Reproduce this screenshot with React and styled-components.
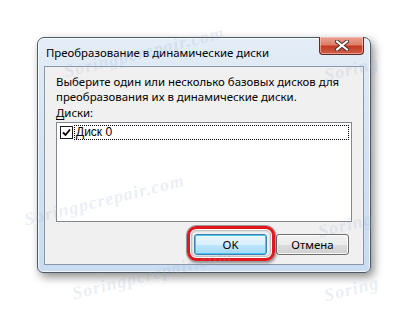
import React from 'react'
import styled, {createGlobalStyle} from 'styled-components'

const GlobalStyle = createGlobalStyle`
    html, body {
        margin: 0;
        padding: 0;
        background: #ffffff;
    }
    body {
        width: 408px;
        height: 309px;
        overflow: hidden;
        font-family: "Noto Sans", "Liberation Sans", sans-serif;
    }
`

const Page = styled.div`
    position: relative;
    width: 408px;
    height: 309px;
    overflow: hidden;
    padding: 37px 0 0 37px;
    box-sizing: border-box;
`

const Window = styled.div`
    width: 334px;
    height: 236px;
    box-sizing: border-box;
    border: 1px solid #4f5a66;
    border-radius: 7px 7px 6px 6px;
    background: linear-gradient(180deg, #e4edf7 0%, #d6e4f3 40%, #c9dcf0 100%);
    box-shadow: 3px 4px 10px rgba(0, 0, 0, 0.45), inset 0 0 0 1px rgba(255, 255, 255, 0.7);
    display: flex;
    flex-direction: column;
`

const TitleBar = styled.div`
    height: 28px;
    display: flex;
    align-items: flex-start;
    justify-content: space-between;
    padding: 0 6px 0 8px;
`

const Title = styled.span`
    font-size: 11.4px;
    color: #000;
    margin-top: 7px;
    white-space: nowrap;
`

const CloseButton = styled.div`
    width: 45px;
    height: 18px;
    margin-top: -1px;
    box-sizing: border-box;
    border: 1px solid #5b2b26;
    border-top: none;
    border-radius: 0 0 4px 4px;
    background: linear-gradient(180deg, #eaa394 0%, #dd7d68 45%, #c23a26 55%, #cf604a 100%);
    box-shadow: inset 0 0 0 1px rgba(255, 210, 200, 0.55);
    display: flex;
    align-items: center;
    justify-content: center;
`

const Client = styled.div`
    flex: 1;
    margin: 0 6px 7px 6px;
    border: 1px solid #8a99aa;
    background: #f0f0f0;
    padding: 7px 11px 0 11px;
    display: flex;
    flex-direction: column;
`

const Text = styled.div`
    font-size: 11.4px;
    line-height: 15px;
    color: #000;
    white-space: nowrap;
`

const Label = styled(Text)`
    margin-top: 1px;
    & u {
        text-decoration-thickness: 1px;
        text-underline-offset: 2px;
    }
`

const ListBox = styled.div`
    margin-top: 2px;
    width: 296px;
    height: 100px;
    box-sizing: border-box;
    border: 1px solid #828790;
    background: #ffffff;
    padding: 2px;
`

const ListItem = styled.div`
    display: flex;
    align-items: center;
    height: 15px;
`

const CheckBox = styled.span`
    width: 11px;
    height: 11px;
    border: 1px solid #1c1c1c;
    background: #fff;
    display: flex;
    align-items: center;
    justify-content: center;
    margin: 0 1px 0 1px;
`

const ItemLabel = styled.span`
    flex: 1;
    height: 15px;
    box-sizing: border-box;
    border: 1px dotted #000;
    font-family: "Liberation Sans", "DejaVu Sans", sans-serif;
    font-size: 12px;
    line-height: 13px;
    padding-left: 1px;
`

const ButtonRow = styled.div`
    display: flex;
    justify-content: flex-end;
    gap: 9px;
    margin-top: 12px;
    padding-right: 3px;
`

const Highlight = styled.div`
    position: relative;
    display: flex;
    &::after {
        content: "";
        position: absolute;
        left: -7px;
        top: -8px;
        right: -8px;
        bottom: -6px;
        border: 3px solid #e3161b;
        border-radius: 9px;
        box-shadow: 0 0 0 1px #9a9a9a, 1px 2px 3px rgba(0, 0, 0, 0.45), inset 0 0 0 1px #ffffff, inset 0 0 2px 2px rgba(0, 0, 0, 0.25);
        pointer-events: none;
    }
`

const Button = styled.button`
    width: 73px;
    height: 21px;
    box-sizing: border-box;
    padding: 0;
    font-family: "Noto Sans", "Liberation Sans", sans-serif;
    font-size: 11.4px;
    color: #000;
    border-radius: 3px;
    border: 1px solid ${p => (p.$focused ? '#3c7fb1' : '#707070')};
    background: ${p => (p.$focused
        ? 'linear-gradient(180deg, #eaf6fd 0%, #d9f0fc 50%, #bee6fd 51%, #a7d9f5 100%)'
        : 'linear-gradient(180deg, #f2f2f2 0%, #ebebeb 50%, #dddddd 51%, #cfcfcf 100%)')};
    box-shadow: inset 0 0 0 1px ${p => (p.$focused ? '#48c7f5' : 'rgba(255,255,255,0.8)')};
`

const Watermark = styled.span`
    position: absolute;
    left: ${p => p.$x}px;
    top: ${p => p.$y}px;
    transform: rotate(-14deg);
    transform-origin: left top;
    font-family: "Liberation Serif", serif;
    font-style: italic;
    font-weight: bold;
    font-size: 18px;
    letter-spacing: 1px;
    color: rgba(150, 170, 205, 0.2);
    white-space: nowrap;
    pointer-events: none;
`

const marks = [
    {x: 62, y: 62, t: 'Soringpcrepair.com'},
    {x: 322, y: 66, t: 'Soring'},
    {x: 22, y: 210, t: 'Soringpcrepair.com'},
    {x: 316, y: 222, t: 'Soring'},
    {x: 70, y: 284, t: 'Soringpcrepair.com'},
    {x: 322, y: 286, t: 'Soring'},
]

export default function App() {
    return (
        <React.Fragment>
            <GlobalStyle/>
            <Page>
                <Window>
                    <TitleBar>
                        <Title>Преобразование в динамические диски</Title>
                        <CloseButton>
                            <svg width="14" height="11" viewBox="0 0 14 11">
                                <path d="M2 1.5 L12 9.5 M12 1.5 L2 9.5" stroke="#4a2a25" strokeWidth="4" strokeLinecap="square"/>
                                <path d="M2 1.5 L12 9.5 M12 1.5 L2 9.5" stroke="#ffffff" strokeWidth="2" strokeLinecap="square"/>
                            </svg>
                        </CloseButton>
                    </TitleBar>
                    <Client>
                        <Text>Выберите один или несколько базовых дисков для</Text>
                        <Text>преобразования их в динамические диски.</Text>
                        <Label><u>Д</u>иски:</Label>
                        <ListBox>
                            <ListItem>
                                <CheckBox>
                                    <svg width="9" height="9" viewBox="0 0 9 9">
                                        <path d="M1 4.5 L3.5 7 L8 1.5" fill="none" stroke="#000" strokeWidth="1.8"/>
                                    </svg>
                                </CheckBox>
                                <ItemLabel>Диск 0</ItemLabel>
                            </ListItem>
                        </ListBox>
                        <ButtonRow>
                            <Highlight>
                                <Button $focused>OK</Button>
                            </Highlight>
                            <Button>Отмена</Button>
                        </ButtonRow>
                    </Client>
                </Window>
                {marks.map((m, i) => (
                    <Watermark key={i} $x={m.x} $y={m.y}>{m.t}</Watermark>
                ))}
            </Page>
        </React.Fragment>
    )
}
